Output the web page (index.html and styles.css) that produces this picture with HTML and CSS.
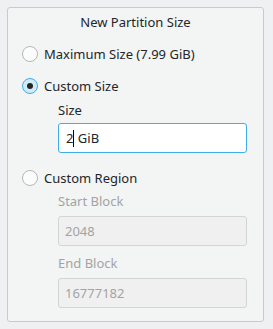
FILE: index.html
```html
<!DOCTYPE html>
<html>
<head>
<meta charset="utf-8">
<link rel="stylesheet" href="styles.css">
</head>
<body>
<div class="group">
  <div class="title">New Partition Size</div>
  <div class="radio-row r1"><span class="radio"></span><span>Maximum Size (7.99 GiB)</span></div>
  <div class="radio-row r2"><span class="radio checked"><span class="dot"></span></span><span>Custom Size</span></div>
  <div class="field">
    <div class="label l-size">Size</div>
    <div class="input active"><span>2</span><span class="caret"></span><span>&nbsp;GiB</span></div>
  </div>
  <div class="radio-row r3"><span class="radio"></span><span>Custom Region</span></div>
  <div class="field">
    <div class="label disabled l-start">Start Block</div>
    <div class="input off">2048</div>
    <div class="label disabled l-end">End Block</div>
    <div class="input off">16777182</div>
  </div>
</div>
</body>
</html>
```

FILE: styles.css
```css
html, body {
  margin: 0;
  padding: 0;
  background: #eff0f1;
  font-family: "Noto Sans", sans-serif;
  font-size: 13px;
  color: #232629;
}
.group {
  margin: 7px 9px 0 7px;
  height: 309px;
  border: 1px solid #c9cacb;
  border-radius: 3px;
  background: #f3f4f4;
  box-sizing: content-box;
  padding-top: 4px;
}
.title {
  text-align: center;
  line-height: 18px;
  height: 18px;
  margin-top: 1px;
}
.radio-row {
  display: flex;
  align-items: center;
  gap: 6px;
  height: 18px;
  line-height: 18px;
  padding-left: 14px;
}
.r1 { margin-top: 14px; }
.r2 { margin-top: 14px; }
.r3 { margin-top: 16px; }
.radio {
  width: 14px;
  height: 14px;
  border: 1px solid #b4b6b8;
  border-radius: 50%;
  background: #fcfcfc;
  display: flex;
  align-items: center;
  justify-content: center;
  flex: none;
}
.radio.checked {
  border-color: #3daee9;
  background: #d1eaf8;
}
.dot {
  width: 6px;
  height: 6px;
  border-radius: 50%;
  background: #232629;
}
.field {
  padding-left: 50px;
  padding-right: 16px;
}
.label {
  line-height: 18px;
  height: 18px;
}
.label.disabled { color: #a2a4a6; }
.l-size { margin-top: 6px; }
.l-start { margin-top: 5px; }
.l-end { margin-top: 8px; }
.input {
  box-sizing: border-box;
  height: 30px;
  margin-top: 4px;
  border: 1px solid #c6c8c9;
  border-radius: 3px;
  display: flex;
  align-items: center;
  padding-left: 6px;
  white-space: pre;
}
.input.active {
  background: #ffffff;
  border-color: #3daee9;
  color: #232629;
  padding-left: 7px;
}
.input.off {
  margin-top: 6px;
  background: #f0f0f0;
  border-color: #d3d4d5;
  color: #a2a4a6;
}
.caret {
  display: inline-block;
  width: 1px;
  height: 17px;
  background: #000;
}
```
